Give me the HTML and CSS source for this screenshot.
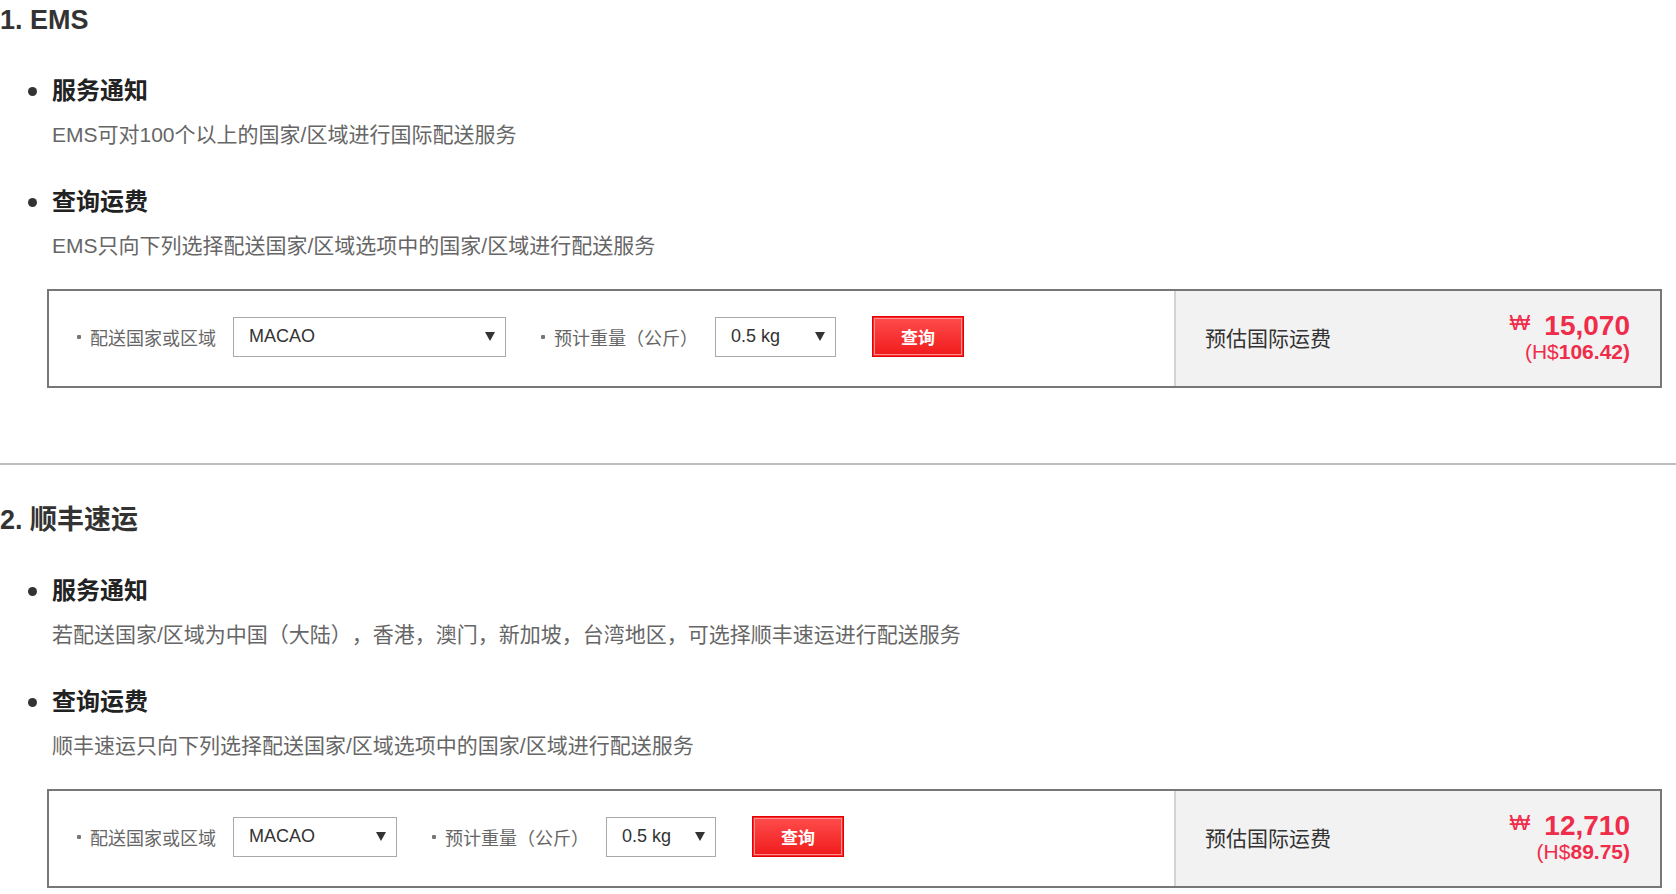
FILE: index.html
```html
<!DOCTYPE html>
<html>
<head>
    <meta charset="utf-8">
    <title>国际配送运费查询</title>
    <link rel="stylesheet" href="styles.css">
</head>
<body>
    <section class="carrier">
        <h2 class="carrier-title">1. EMS</h2>
        <ul class="info-list">
            <li>
                <h3>服务通知</h3>
                <p>EMS可对100个以上的国家/区域进行国际配送服务</p>
            </li>
            <li>
                <h3>查询运费</h3>
                <p>EMS只向下列选择配送国家/区域选项中的国家/区域进行配送服务</p>
            </li>
        </ul>
        <div class="rate-box">
            <div class="rate-form">
                <span class="field-label">配送国家或区域</span>
                <div class="fake-select select-country">
                    <span>MACAO</span>
                    <svg class="arrow" width="10" height="9" viewBox="0 0 10 9"><polygon points="0,0 10,0 5,9" fill="#333"/></svg>
                </div>
                <span class="field-label">预计重量（公斤）</span>
                <div class="fake-select select-weight">
                    <span>0.5 kg</span>
                    <svg class="arrow" width="10" height="9" viewBox="0 0 10 9"><polygon points="0,0 10,0 5,9" fill="#333"/></svg>
                </div>
                <button class="btn-query">查询</button>
            </div>
            <div class="rate-result">
                <span class="result-label">预估国际运费</span>
                <div class="result-amount">
                    <div class="amount-krw"><span class="won">₩</span>15,070</div>
                    <div class="amount-hkd"><span class="prefix">(H$</span>106.42)</div>
                </div>
            </div>
        </div>
    </section>

    <section class="carrier">
        <h2 class="carrier-title">2. 顺丰速运</h2>
        <ul class="info-list">
            <li>
                <h3>服务通知</h3>
                <p>若配送国家/区域为中国（大陆），香港，澳门，新加坡，台湾地区，可选择顺丰速运进行配送服务</p>
            </li>
            <li>
                <h3>查询运费</h3>
                <p>顺丰速运只向下列选择配送国家/区域选项中的国家/区域进行配送服务</p>
            </li>
        </ul>
        <div class="rate-box">
            <div class="rate-form">
                <span class="field-label">配送国家或区域</span>
                <div class="fake-select select-country short">
                    <span>MACAO</span>
                    <svg class="arrow" width="10" height="9" viewBox="0 0 10 9"><polygon points="0,0 10,0 5,9" fill="#333"/></svg>
                </div>
                <span class="field-label">预计重量（公斤）</span>
                <div class="fake-select select-weight short">
                    <span>0.5 kg</span>
                    <svg class="arrow" width="10" height="9" viewBox="0 0 10 9"><polygon points="0,0 10,0 5,9" fill="#333"/></svg>
                </div>
                <button class="btn-query">查询</button>
            </div>
            <div class="rate-result">
                <span class="result-label">预估国际运费</span>
                <div class="result-amount">
                    <div class="amount-krw"><span class="won">₩</span>12,710</div>
                    <div class="amount-hkd"><span class="prefix">(H$</span>89.75)</div>
                </div>
            </div>
        </div>
    </section>
</body>
</html>
```

FILE: styles.css
```css
html, body { margin: 0; padding: 0; }
body {
    font-family: "Liberation Sans", "Noto Sans CJK SC", sans-serif;
    color: #333;
    background: #fff;
    text-spacing-trim: space-all;
}

.carrier { padding-bottom: 75px; border-bottom: 2px solid #bdbdbd; }
.carrier + .carrier { padding-top: 35px; padding-bottom: 0; border-bottom: none; }
.carrier-title { margin: 0; font-size: 27px; line-height: 40px; font-weight: bold; color: #333; }

.info-list { list-style: none; margin: 0; padding: 0; }
.info-list li { margin-top: 35px; }
.info-list h3 {
    display: flex;
    align-items: center;
    margin: 0;
    font-size: 24px;
    line-height: 32px;
    color: #222;
}
.info-list h3::before {
    content: "";
    width: 9px;
    height: 9px;
    border-radius: 50%;
    background: #333;
    margin: 0 15px 0 28px;
}
.info-list p { margin: 12px 0 0 52px; font-size: 21px; line-height: 32px; color: #666; }

.rate-box {
    display: flex;
    margin: 27px 14px 0 47px;
    border: 2px solid #777;
}
.rate-form {
    flex: 1;
    display: flex;
    align-items: center;
    padding: 25px 0 29px 28px;
}
.field-label { display: flex; align-items: center; font-size: 18px; color: #666; }
.field-label::before {
    content: "";
    width: 4px;
    height: 4px;
    border-radius: 1px;
    background: #777;
    margin-right: 9px;
}
.fake-select + .field-label { margin-left: 35px; }

.fake-select {
    display: flex;
    align-items: center;
    justify-content: space-between;
    box-sizing: border-box;
    height: 40px;
    margin-left: 17px;
    padding: 0 10px 0 15px;
    border: 1px solid #aaa;
    background: #fff;
    font-size: 18px;
    color: #333;
}
.select-country { width: 273px; }
.select-country.short { width: 164px; }
.select-weight { width: 121px; }
.select-weight.short { width: 110px; }

.btn-query {
    width: 92px;
    height: 41px;
    margin-left: 36px;
    border: 1px solid #e40000;
    background: linear-gradient(#ff4d4d, #f01a1a);
    box-shadow: inset 0 0 0 1px #f42a2a, inset 0 0 0 2px #ff8f8f;
    color: #fff;
    font: bold 17px "Liberation Sans", "Noto Sans CJK SC", sans-serif;
    cursor: pointer;
}

.rate-result {
    box-sizing: border-box;
    width: 486px;
    display: flex;
    align-items: center;
    justify-content: space-between;
    padding: 0 30px 0 29px;
    background: #f2f2f2;
    border-left: 2px solid #d3d3d3;
}
.result-label { font-size: 21px; color: #333; padding-bottom: 3px; }
.result-amount { text-align: right; color: #ef2d4a; font-weight: bold; padding-bottom: 6px; }
.amount-krw { font-size: 28px; line-height: 30px; }
.won { font-size: 22px; font-weight: normal; vertical-align: 5px; margin-right: 14px; }
.amount-hkd { font-size: 21px; line-height: 22px; }
.amount-hkd .prefix { font-weight: normal; }
```
